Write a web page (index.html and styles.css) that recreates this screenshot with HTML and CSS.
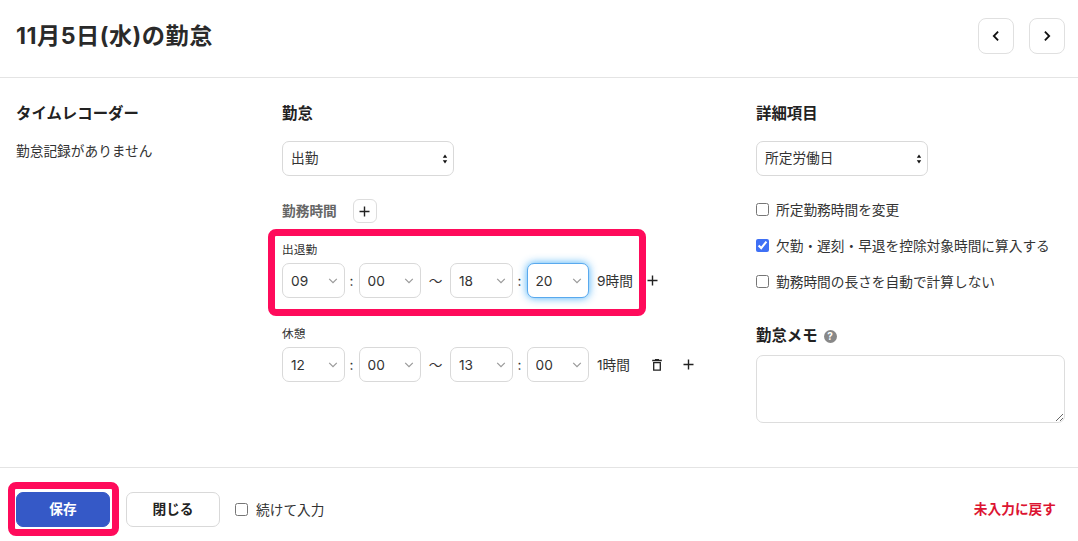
FILE: index.html
```html
<!DOCTYPE html>
<html lang="ja">
<head>
    <meta charset="UTF-8">
    <meta name="viewport" content="width=device-width, initial-scale=1.0">
    <title>11月5日(水)の勤怠</title>
    <link rel="stylesheet" href="styles.css">
</head>
<body>
    <div class="dialog">
        <header class="header">
            <h1>11月5日(水)の勤怠</h1>
            <div class="nav">
                <button class="nav-button" aria-label="前の日">
                    <svg width="12" height="12" viewBox="0 0 12 12"><path d="M8.1 1.6L3.8 6l4.3 4.4"/></svg>
                </button>
                <button class="nav-button" aria-label="次の日">
                    <svg width="12" height="12" viewBox="0 0 12 12"><path d="M3.9 1.6L8.2 6l-4.3 4.4"/></svg>
                </button>
            </div>
        </header>

        <main class="content">
            <section>
                <h2>タイムレコーダー</h2>
                <p class="record">勤怠記録がありません</p>
            </section>

            <section>
                <h2>勤怠</h2>
                <div class="select wide">
                    <select><option>出勤</option></select>
                    <svg class="updown" width="6" height="10" viewBox="0 0 6 10"><path d="M3 0.5L5.2 3.8H0.8zM3 9.5L0.8 6.2h4.4z"/></svg>
                </div>

                <div class="work-title">
                    <h3>勤務時間</h3>
                    <button class="add-button" aria-label="追加">
                        <svg class="plus" width="11" height="11" viewBox="0 0 11 11"><path d="M5.5 0.5v10M0.5 5.5h10"/></svg>
                    </button>
                </div>

                <div class="time-block">
                    <div class="highlight highlight-time"></div>
                    <div class="time-label">出退勤</div>
                    <div class="time-row">
                        <div class="select"><select><option>09</option></select><svg class="chevron" width="10" height="6" viewBox="0 0 10 6"><path d="M1.2 0.9L5 4.6l3.8-3.7"/></svg></div>
                        <span class="colon">:</span>
                        <div class="select"><select><option>00</option></select><svg class="chevron" width="10" height="6" viewBox="0 0 10 6"><path d="M1.2 0.9L5 4.6l3.8-3.7"/></svg></div>
                        <span class="tilde">〜</span>
                        <div class="select"><select><option>18</option></select><svg class="chevron" width="10" height="6" viewBox="0 0 10 6"><path d="M1.2 0.9L5 4.6l3.8-3.7"/></svg></div>
                        <span class="colon">:</span>
                        <div class="select focused"><select><option>20</option></select><svg class="chevron" width="10" height="6" viewBox="0 0 10 6"><path d="M1.2 0.9L5 4.6l3.8-3.7"/></svg></div>
                        <span class="hours">9時間</span>
                        <svg class="plus plus-near" width="11" height="11" viewBox="0 0 11 11"><path d="M5.5 0.5v10M0.5 5.5h10"/></svg>
                    </div>
                </div>

                <div class="time-block">
                    <div class="time-label">休憩</div>
                    <div class="time-row">
                        <div class="select"><select><option>12</option></select><svg class="chevron" width="10" height="6" viewBox="0 0 10 6"><path d="M1.2 0.9L5 4.6l3.8-3.7"/></svg></div>
                        <span class="colon">:</span>
                        <div class="select"><select><option>00</option></select><svg class="chevron" width="10" height="6" viewBox="0 0 10 6"><path d="M1.2 0.9L5 4.6l3.8-3.7"/></svg></div>
                        <span class="tilde">〜</span>
                        <div class="select"><select><option>13</option></select><svg class="chevron" width="10" height="6" viewBox="0 0 10 6"><path d="M1.2 0.9L5 4.6l3.8-3.7"/></svg></div>
                        <span class="colon">:</span>
                        <div class="select"><select><option>00</option></select><svg class="chevron" width="10" height="6" viewBox="0 0 10 6"><path d="M1.2 0.9L5 4.6l3.8-3.7"/></svg></div>
                        <span class="hours">1時間</span>
                        <svg class="trash" width="10" height="12" viewBox="0 0 10 12"><path d="M0.2 1.5h9.6M3 0.7h4M1.7 3.6v7.6h6.6V3.6z"/></svg>
                        <svg class="plus" width="11" height="11" viewBox="0 0 11 11"><path d="M5.5 0.5v10M0.5 5.5h10"/></svg>
                    </div>
                </div>
            </section>

            <section>
                <h2>詳細項目</h2>
                <div class="select wide">
                    <select><option>所定労働日</option></select>
                    <svg class="updown" width="6" height="10" viewBox="0 0 6 10"><path d="M3 0.5L5.2 3.8H0.8zM3 9.5L0.8 6.2h4.4z"/></svg>
                </div>

                <div class="checks">
                    <label class="check"><input type="checkbox">所定勤務時間を変更</label>
                    <label class="check"><input type="checkbox" checked>欠勤・遅刻・早退を控除対象時間に算入する</label>
                    <label class="check"><input type="checkbox">勤務時間の長さを自動で計算しない</label>
                </div>

                <div class="memo-title">
                    <h2>勤怠メモ</h2>
                    <span class="help">?</span>
                </div>
                <textarea class="memo"></textarea>
            </section>
        </main>

        <footer class="footer">
            <div class="save-wrap">
                <div class="highlight highlight-save"></div>
                <button class="button save">保存</button>
            </div>
            <button class="button">閉じる</button>
            <label class="check"><input type="checkbox">続けて入力</label>
            <a class="reset">未入力に戻す</a>
        </footer>
    </div>
</body>
</html>
```

FILE: styles.css
```css
* {
    box-sizing: border-box;
}

body {
    margin: 0;
    font-family: Inter, "Noto Sans CJK JP", sans-serif;
    font-size: 13.7px;
    line-height: 20px;
    color: #333;
    background: #fff;
    overflow: hidden;
}

h1, h2, h3, p {
    margin: 0;
}

button, select, textarea {
    font-family: inherit;
    font-size: inherit;
    color: inherit;
}

svg {
    display: block;
    fill: none;
    flex-shrink: 0;
}

.dialog {
    display: flex;
    flex-direction: column;
    height: 541px;
}

.header {
    display: flex;
    justify-content: space-between;
    height: 78px;
    padding: 18px 13px 0 16px;
    border-bottom: 1px solid #e4e4e4;
}

h1 {
    font-size: 23.2px;
    line-height: 37px;
    letter-spacing: 0.5px;
    color: #2a2a2a;
}

.nav {
    display: flex;
    gap: 15px;
}

.nav-button {
    display: flex;
    align-items: center;
    justify-content: center;
    width: 36px;
    height: 36px;
    padding: 0;
    background: #fff;
    border: 1px solid #e0e0e0;
    border-radius: 8px;
}

.nav-button path {
    stroke: #111;
    stroke-width: 1.8;
}

.content {
    display: grid;
    grid-template-columns: 266px 474px 309px;
    height: 389px;
    padding: 26px 13px 0 16px;
}

h2 {
    font-size: 15.4px;
    line-height: 20px;
    color: #222;
}

.record {
    margin-top: 17px;
}

.select {
    position: relative;
    width: 62.5px;
    height: 35px;
}

.select select {
    width: 100%;
    height: 100%;
    padding: 0 8px;
    background: #fff;
    border: 1px solid #d9d9d9;
    border-radius: 7px;
    outline: none;
    appearance: none;
}

.select.wide {
    width: 172px;
    margin-top: 17px;
}

.select.wide select {
    padding-bottom: 2px;
}

.select.focused select {
    border-color: #59a9ee;
    box-shadow: 0 0 8px rgba(50, 165, 245, 0.9);
}

.chevron {
    position: absolute;
    top: 15px;
    right: 7px;
    stroke: #999;
    stroke-width: 1.2;
}

.updown {
    position: absolute;
    top: 13px;
    right: 6px;
    fill: #111;
}

.work-title {
    display: flex;
    align-items: center;
    gap: 16px;
    height: 24px;
    margin-top: 23px;
}

h3 {
    font-size: 13.7px;
    color: #666;
}

.add-button {
    display: flex;
    align-items: center;
    justify-content: center;
    width: 24px;
    height: 24px;
    padding: 0;
    background: #fff;
    border: 1px solid #ddd;
    border-radius: 6px;
}

.plus {
    stroke: #222;
    stroke-width: 1.4;
}

.time-block {
    position: relative;
    height: 84px;
    padding-top: 17px;
}

.time-label {
    height: 23px;
    font-size: 11.7px;
    line-height: 20px;
}

.time-row {
    display: flex;
    align-items: center;
}

.colon {
    width: 14px;
    text-align: center;
}

.tilde {
    width: 29px;
    text-align: center;
}

.hours {
    width: 55px;
    padding-left: 8px;
}

.plus-near {
    margin-left: 3px;
}

.trash {
    margin-right: 21px;
    margin-left: 8px;
    stroke: #222;
    stroke-width: 1.3;
}

/* red frames over the form */
.highlight {
    position: absolute;
    border: 7px solid #ff0b5b;
    border-radius: 8px;
    pointer-events: none;
}

.highlight-time {
    top: 6px;
    left: -14px;
    width: 378px;
    height: 87px;
}

.highlight-save {
    top: -10px;
    left: -8px;
    width: 111px;
    height: 54px;
}

.checks {
    display: flex;
    flex-direction: column;
    gap: 16px;
    margin-top: 24px;
}

.check {
    display: flex;
    align-items: center;
    gap: 8px;
    white-space: nowrap;
}

.check input {
    width: 13px;
    height: 13px;
    margin: 0 -1px 2px 0;
    accent-color: #3f70f5;
}

.memo-title {
    display: flex;
    align-items: center;
    gap: 6px;
    margin-top: 34px;
}

.help {
    width: 13px;
    height: 13px;
    background: #888;
    border-radius: 50%;
    color: #fff;
    font-size: 10px;
    font-weight: bold;
    line-height: 13px;
    text-align: center;
}

.memo {
    display: block;
    width: 309px;
    height: 68px;
    margin-top: 9px;
    border: 1px solid #ddd;
    border-radius: 7px;
    outline: none;
}

.footer {
    display: flex;
    align-items: flex-start;
    height: 74px;
    padding: 24px 22px 0 16px;
    border-top: 1px solid #e4e4e4;
}

.save-wrap {
    position: relative;
    margin-right: 16px;
}

.button {
    display: block;
    width: 94px;
    height: 35px;
    padding: 0 0 3px;
    background: #fff;
    border: 1px solid #d9d9d9;
    border-radius: 7px;
    color: #222;
    font-weight: bold;
}

.button.save {
    background: #3559c7;
    border-color: #3559c7;
    color: #fff;
}

.footer .check {
    margin: 8px 0 0 15px;
}

.footer .check input {
    margin-right: 0;
}

.reset {
    margin: 7px 0 0 auto;
    color: #dc1432;
    font-weight: bold;
}
```
